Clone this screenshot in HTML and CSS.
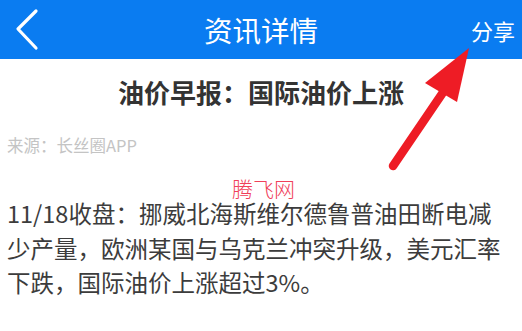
FILE: index.html
```html
<!DOCTYPE html>
<html lang="zh-CN">
<head>
<meta charset="utf-8">
<link rel="stylesheet" href="styles.css">
</head>
<body>
<div class="page">
  <header class="bar">
    <div class="bar-left">
      <svg class="back" width="30" height="44" viewBox="0 0 30 44"><polyline points="22,3 4,21 22,40" fill="none" stroke="#fff" stroke-width="3.2" stroke-linecap="round" stroke-linejoin="round"/></svg>
    </div>
    <div class="bar-title">资讯详情</div>
    <div class="bar-right">分享</div>
  </header>
  <h1 class="headline">油价早报：国际油价上涨</h1>
  <div class="source">来源：长丝圈APP</div>
  <p class="content">11/18收盘：挪威北海斯维尔德鲁普油田断电减<br>少产量，欧洲某国与乌克兰冲突升级，美元汇率<br>下跌，国际油价上涨超过3%。</p>
  <div class="watermark">腾飞网</div>
  <svg class="arrow" width="522" height="331" viewBox="0 0 522 331">
    <line x1="393" y1="166" x2="446" y2="88" stroke="#ee1c25" stroke-width="8.5" stroke-linecap="round"/>
    <polygon points="469,48 425,83 457,102" fill="#ee1c25"/>
  </svg>
</div>
</body>
</html>
```
FILE: styles.css
```css
html, body {
  margin: 0;
  padding: 0;
  background: #fff;
}
body {
  font-family: "Noto Sans CJK SC", "Noto Sans", sans-serif;
  width: 522px;
  height: 331px;
  overflow: hidden;
}
.page {
  position: relative;
  width: 522px;
  height: 331px;
}
.bar {
  height: 59px;
  background: #0a7cf1;
  display: grid;
  grid-template-columns: 1fr auto 1fr;
  align-items: center;
  color: #fff;
}
.bar-left {
  display: flex;
  align-items: center;
  padding-left: 14px;
}
.back {
  display: block;
}
.bar-title {
  font-size: 28.5px;
  line-height: 40px;
}
.bar-right {
  justify-self: end;
  font-size: 22px;
  line-height: 30px;
  padding-right: 7px;
  padding-top: 1px;
}
.headline {
  margin: 13px 0 0;
  font-size: 26px;
  line-height: 40px;
  font-weight: bold;
  text-align: center;
  color: #333;
}
.source {
  margin-top: 23px;
  padding-left: 7px;
  font-size: 16.5px;
  line-height: 20px;
  color: #c4c4c4;
}
.content {
  margin: 41px 0 0;
  padding: 0 7px;
  font-size: 23.5px;
  line-height: 34.5px;
  color: #3c3c3c;
  white-space: nowrap;
}
.watermark {
  position: absolute;
  left: 232px;
  top: 178px;
  font-size: 21px;
  line-height: 20px;
  color: #f0405a;
  font-weight: 300;
}
.arrow {
  position: absolute;
  left: 0;
  top: 0;
  pointer-events: none;
}
```
